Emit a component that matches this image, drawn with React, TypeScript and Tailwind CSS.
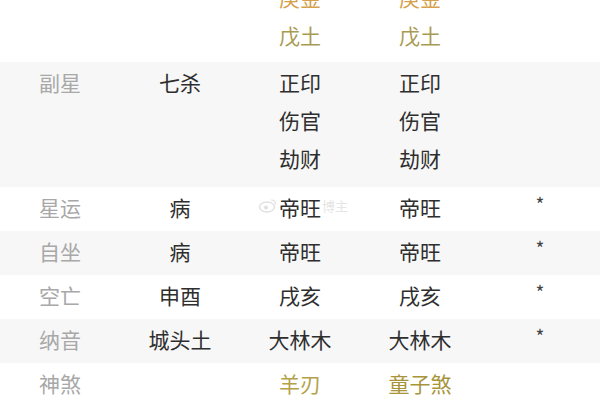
const FONT = { fontFamily: '"Noto Sans CJK SC", "Noto Sans", sans-serif' };

type Row = {
  label: string;
  cells: string[];
  star?: boolean;
  gray?: boolean;
};

const rows: Row[] = [
  { label: "星运", cells: ["病", "帝旺", "帝旺"], star: true },
  { label: "自坐", cells: ["病", "帝旺", "帝旺"], star: true, gray: true },
  { label: "空亡", cells: ["申酉", "戌亥", "戌亥"], star: true },
  { label: "纳音", cells: ["城头土", "大林木", "大林木"], star: true, gray: true },
];

function Cell({ children, className = "" }: { children?: React.ReactNode; className?: string }) {
  return <div className={`w-[120px] flex flex-col items-center ${className}`}>{children}</div>;
}

export default function App() {
  return (
    <div className="w-[600px] h-[400px] overflow-hidden bg-white text-[21px]" style={FONT}>
      {/* top row, partly cut off */}
      <div className="flex -mt-[22px] pb-[8px] leading-[38px]">
        <Cell />
        <Cell />
        <Cell>
          <span className="text-[#d6a04c]">庚金</span>
          <span className="text-[#a99a52]">戊土</span>
        </Cell>
        <Cell>
          <span className="text-[#d6a04c]">庚金</span>
          <span className="text-[#a99a52]">戊土</span>
        </Cell>
        <Cell />
      </div>

      {/* 副星 */}
      <div className="flex h-[125px] pt-[1px] leading-[38px] bg-[#f7f7f7]">
        <Cell className="text-[#a8a8a8]">副星</Cell>
        <Cell className="text-[#2e2e2e]">七杀</Cell>
        <Cell className="text-[#2e2e2e]">
          <span>正印</span>
          <span>伤官</span>
          <span>劫财</span>
        </Cell>
        <Cell className="text-[#2e2e2e]">
          <span>正印</span>
          <span>伤官</span>
          <span>劫财</span>
        </Cell>
        <Cell />
      </div>

      {rows.map((r, i) => (
        <div key={r.label} className={`relative flex h-[44px] items-center pb-[3px] ${r.gray ? "bg-[#f7f7f7]" : "bg-white"}`}>
          <Cell className="text-[#a8a8a8]">{r.label}</Cell>
          {r.cells.map((c, j) => (
            <Cell key={j} className="text-[#2e2e2e]">{c}</Cell>
          ))}
          <Cell className="text-[#444]">
            {r.star && <span className="text-[19px] leading-none -mt-[8px]">*</span>}
          </Cell>
          {i === 0 && (
            <div className="absolute left-[258px] top-[9px] flex items-center opacity-25 text-[#999] text-[13px]">
              <svg width="20" height="15" viewBox="0 0 20 15">
                <ellipse cx="9" cy="9" rx="7.5" ry="5" fill="none" stroke="#888" strokeWidth="1.4" />
                <circle cx="8" cy="9.5" r="2" fill="#888" />
                <path d="M13 2 q4.5 0 4.5 4.5" fill="none" stroke="#888" strokeWidth="1.2" />
              </svg>
              <span className="ml-[44px]">博主</span>
            </div>
          )}
        </div>
      ))}

      {/* 神煞 */}
      <div className="flex h-[44px] items-center pb-[3px]">
        <Cell className="text-[#a8a8a8]">神煞</Cell>
        <Cell />
        <Cell className="text-[#b3a24a]">羊刃</Cell>
        <Cell className="text-[#a8953a]">童子煞</Cell>
        <Cell />
      </div>
    </div>
  );
}
